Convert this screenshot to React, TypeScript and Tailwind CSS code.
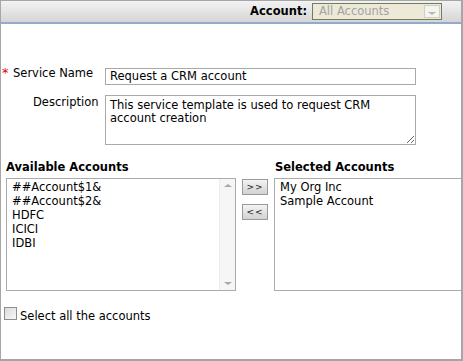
import React from "react";

const availableAccounts = ["##Account$1&", "##Account$2&", "HDFC", "ICICI", "IDBI"];
const selectedAccounts = ["My Org Inc", "Sample Account"];

function MoveButton({ label }: { label: string }) {
  return (
    <button
      type="button"
      className="flex h-[16px] w-[26px] items-center justify-center border border-[#9a9a9a] bg-gradient-to-b from-[#f4f4f4] to-[#d2d2d2] text-[9px] leading-none tracking-[1px] text-[#222]"
    >
      {label}
    </button>
  );
}

function ListBox({ items, scroll, width }: { items: string[]; scroll?: boolean; width: string }) {
  return (
    <div className={`flex h-[113px] border border-[#ababab] bg-white ${width}`}>
      <div className="flex-1 pl-[5px] pt-[1px]">
        {items.map((item) => (
          <div key={item} className="leading-[14px] text-black">
            {item}
          </div>
        ))}
      </div>
      {scroll && (
        <div className="flex w-[16px] flex-col items-center justify-between border-l border-[#ececec] bg-[#f6f6f6] py-[5px]">
          <span className="h-0 w-0 border-x-[4px] border-b-[3px] border-x-transparent border-b-[#a8a8a8]" />
          <span className="h-0 w-0 border-x-[4px] border-t-[3px] border-x-transparent border-t-[#a8a8a8]" />
        </div>
      )}
    </div>
  );
}

export default function App() {
  return (
    <div
      className="h-[361px] w-[463px] overflow-hidden border-b-2 border-l border-r-2 border-t border-[#a6a6a6] bg-white text-[11.5px] text-black"
      style={{ fontFamily: '"DejaVu Sans", Verdana, sans-serif' }}
    >
      {/* top bar */}
      <div className="flex h-[23px] items-center justify-end border-b-2 border-[#93abc8] bg-gradient-to-b from-[#f3f3f3] to-[#d5d5d5] pr-[19px]">
        <span className="mr-[5px] font-bold">Account:</span>
        <div className="flex h-[17px] w-[130px] items-center border border-[#707e5a] bg-[#ece9d8] pl-[6px] pr-[1px]">
          <span className="flex-1 text-[#a3a3a3]">All Accounts</span>
          <span className="flex h-[13px] w-[16px] items-center justify-center border border-[#cfcfc6] bg-[#f4f3ee]">
            <span className="mt-[3px] h-0 w-0 border-x-[4px] border-t-[3px] border-x-transparent border-t-[#b5b5b5]" />
          </span>
        </div>
      </div>

      {/* form fields */}
      <div className="mt-[42px] flex items-start">
        <span className="ml-[1px] w-[11px] text-[13px] leading-[14px] text-[#e00000]">*</span>
        <span className="w-[92px] leading-[14px]">Service Name</span>
        <div className="mt-[2px] flex h-[17px] w-[311px] items-center border border-[#a9a9a9] pl-[4px]">
          Request a CRM account
        </div>
      </div>
      <div className="mt-[10px] flex items-start">
        <span className="ml-[32px] w-[72px] leading-[14px]">Description</span>
        <textarea
          readOnly
          className="h-[50px] w-[311px] border border-[#a9a9a9] px-[4px] pt-[3px] leading-[13px] outline-none"
          defaultValue={"This service template is used to request CRM account creation"}
        />
      </div>

      {/* accounts pickers */}
      <div className="mt-[15px] grid grid-cols-[230px_38px_200px] pl-[5px]">
        <div className="pb-[4px] font-bold leading-[14px]">Available Accounts</div>
        <div />
        <div className="pb-[4px] pl-[1px] font-bold leading-[14px]">Selected Accounts</div>
        <ListBox items={availableAccounts} scroll width="w-[230px]" />
        <div className="flex flex-col gap-[9px] pl-[6px] pt-[1px]">
          <MoveButton label=">>" />
          <MoveButton label="<<" />
        </div>
        <ListBox items={selectedAccounts} width="w-[200px]" />
      </div>

      <label className="ml-[3px] mt-[16px] flex items-start gap-[3px]">
        <span className="h-[13px] w-[13px] border border-[#8e8f8f] bg-gradient-to-br from-[#dcdcdc] to-[#f8f8f8]" />
        <span className="mt-[2px] leading-[14px]">Select all the accounts</span>
      </label>
    </div>
  );
}
